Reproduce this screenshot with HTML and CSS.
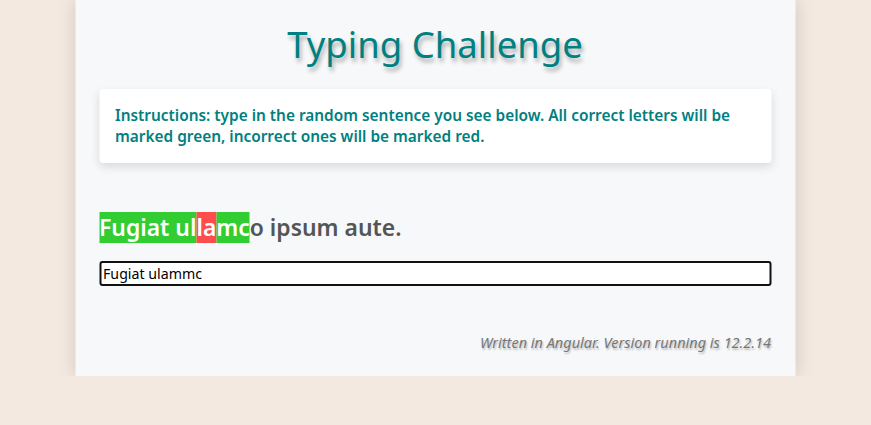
FILE: index.html
```html
<!DOCTYPE html>
<html>
<head>
<meta charset="utf-8">
<link rel="stylesheet" href="styles.css">
</head>
<body>
<div class="app">
  <h1 class="title">Typing Challenge</h1>
  <div class="card">Instructions: type in the random sentence you see below. All correct letters will be marked green, incorrect ones will be marked red.</div>
  <div class="sentence"><span class="ok">Fugiat ul</span><span class="bad">la</span><span class="ok">mc</span>o ipsum aute.</div>
  <input class="entry" type="text" value="Fugiat ulammc">
  <div class="footer">Written in Angular. Version running is 12.2.14</div>
</div>
</body>
</html>
```
FILE: styles.css
```css
html, body {
  margin: 0;
  padding: 0;
}
body {
  background: #f3e9e0;
  font-family: "Noto Sans", sans-serif;
}
.app {
  width: 672px;
  margin: 0 auto;
  padding: 22px 24px 24px;
  background: #f7f8fa;
  box-shadow: 0 0 18px rgba(0, 0, 0, 0.15);
  display: flex;
  flex-direction: column;
  transform: translateX(-0.5px);
}
.title {
  margin: 0;
  text-align: center;
  font-size: 36.5px;
  font-weight: normal;
  color: #008080;
  text-shadow: 2px 4px 4px rgba(0, 0, 0, 0.3);
  line-height: 44px;
}
.card {
  margin-top: 23px;
  background: #fff;
  border-radius: 4px;
  box-shadow: 0 4px 10px rgba(0, 0, 0, 0.12);
  padding: 16px 16px;
  color: #008080;
  font-size: 15.4px;
  font-weight: 600;
  line-height: 21px;
}
.sentence {
  margin-top: 48px;
  font-size: 22.9px;
  font-weight: 600;
  color: #555;
  line-height: 33px;
  align-self: flex-start;
}
.ok {
  background: #32cd32;
  color: #fff;
}
.bad {
  background: #ff4d4d;
  color: #fff;
}
.entry {
  margin-top: 17px;
  border: 2px solid #111;
  border-radius: 3px;
  font-family: "Noto Sans", sans-serif;
  font-size: 14.2px;
  padding: 2px 2px;
  height: 25px;
  box-sizing: border-box;
  outline: none;
  background: #fff;
  color: #000;
}
.footer {
  margin-top: 47px;
  text-align: right;
  font-style: italic;
  font-size: 14.5px;
  color: #777;
  text-shadow: 1px 2px 2px rgba(0, 0, 0, 0.25);
  line-height: 19px;
}
```
